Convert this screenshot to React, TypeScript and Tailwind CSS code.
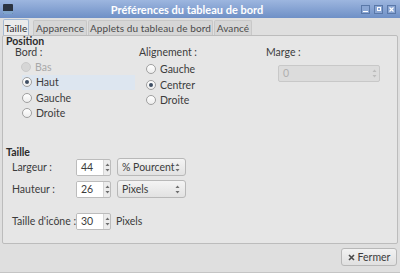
import React from "react";

function Radio({ checked, disabled }: { checked?: boolean; disabled?: boolean }) {
  return (
    <span
      className={
        "flex h-[10px] w-[10px] shrink-0 items-center justify-center rounded-full border " +
        (disabled
          ? "border-[#cacaca] bg-[#d6d6d6]"
          : "border-[#a0a0a0] bg-gradient-to-b from-white to-[#ededed]")
      }
    >
      {checked && <span className="h-[4px] w-[4px] rounded-full bg-[#3d4d63]" />}
    </span>
  );
}

function RadioRow({
  label,
  checked,
  disabled,
  highlight,
}: {
  label: string;
  checked?: boolean;
  disabled?: boolean;
  highlight?: boolean;
}) {
  return (
    <div
      className={
        "flex h-[15.5px] items-center gap-[4px] whitespace-nowrap " +
        (highlight ? "bg-[#dde6f0]" : "")
      }
    >
      <Radio checked={checked} disabled={disabled} />
      <span className={disabled ? "text-[#a8a8a8]" : "text-[#3c3c3c]"}>{label}</span>
    </div>
  );
}

// tiny up/down triangles used in spin buttons and combos
function Arrows({ disabled }: { disabled?: boolean }) {
  return (
    <svg width="5" height="9" viewBox="0 0 5 9" className="shrink-0">
      <path d="M2.5 0.5 L4.5 3 L0.5 3 Z" fill={disabled ? "#bcbcbc" : "#6e6e6e"} />
      <path d="M0.5 6 L4.5 6 L2.5 8.5 Z" fill={disabled ? "#bcbcbc" : "#6e6e6e"} />
    </svg>
  );
}

function SpinBox({ value }: { value: string }) {
  return (
    <div className="flex h-[17px] w-[35px] shrink-0 overflow-hidden rounded-[2px] border border-[#bcbcbc] bg-[#ececec]">
      <div className="flex w-[26px] items-center bg-white pl-[4px] text-[#3c3c3c]">{value}</div>
      <div className="flex flex-1 items-center justify-center border-l border-[#d6d6d6]">
        <Arrows />
      </div>
    </div>
  );
}

function Combo({ value }: { value: string }) {
  return (
    <div className="flex h-[18px] w-[69px] shrink-0 items-center justify-between whitespace-nowrap rounded-[3px] border border-[#b8b8b8] bg-gradient-to-b from-[#f4f4f4] to-[#e2e2e2] pl-[4px] pr-[5px] text-[#3c3c3c]">
      <span>{value}</span>
      <Arrows />
    </div>
  );
}

export default function App() {
  return (
    <div
      className="flex h-[273px] w-[400px] flex-col overflow-hidden bg-[#dfdfdf] text-[10.5px] leading-none text-[#3c3c3c]"
      style={{ fontFamily: 'Lato, "Noto Sans", sans-serif' }}
    >
      {/* Title bar */}
      <div className="flex h-[18px] shrink-0 items-center bg-gradient-to-b from-[#9db6df] to-[#6f90c6]">
        <div className="ml-[3px] flex h-[10px] w-[10px] flex-col overflow-hidden rounded-[1px] bg-[#2b3340]">
          <div className="flex-1" />
          <div className="h-[3px] bg-[#7fa4cc]" />
        </div>
        <div className="flex-1 whitespace-nowrap text-center text-[11px] font-bold text-white">
          Préférences du tableau de bord
        </div>
        <div className="mr-[4px] flex gap-[4px]">
          <div className="flex h-[9px] w-[9px] items-end justify-center border border-[#5a78a8] bg-[#8aa6d4] pb-[1px]">
            <div className="h-[1px] w-[5px] bg-white" />
          </div>
          <div className="flex h-[9px] w-[9px] items-center justify-center border border-[#5a78a8] bg-[#8aa6d4]">
            <div className="h-[4px] w-[4px] border border-white" />
          </div>
          <div className="flex h-[9px] w-[9px] items-center justify-center border border-[#5a78a8] bg-[#8aa6d4]">
            <svg width="5" height="5" viewBox="0 0 5 5">
              <path d="M0.5 0.5 L4.5 4.5 M4.5 0.5 L0.5 4.5" stroke="white" strokeWidth="1.2" />
            </svg>
          </div>
        </div>
      </div>

      {/* Tabs */}
      <div className="flex h-[17px] shrink-0 items-end gap-[1px] whitespace-nowrap pl-[3px] pt-[1px] text-[10px] tracking-[0.1px]">
        <div className="mr-[3px] flex h-[16px] w-[26px] items-center justify-center rounded-t-[2px] border border-b-0 border-[#a4bad4] bg-[#ebebeb] text-[#2c2c2c]">
          Taille
        </div>
        <div className="flex h-[15px] w-[54px] items-center justify-center rounded-t-[2px] border border-b-0 border-[#c8c8c8] bg-[#d6d6d6] text-[#4a4a4a]">
          Apparence
        </div>
        <div className="flex h-[15px] w-[125px] items-center justify-center rounded-t-[2px] border border-b-0 border-[#c8c8c8] bg-[#d6d6d6] text-[#4a4a4a]">
          Applets du tableau de bord
        </div>
        <div className="flex h-[15px] w-[38px] items-center justify-center rounded-t-[2px] border border-b-0 border-[#c8c8c8] bg-[#d6d6d6] text-[#4a4a4a]">
          Avancé
        </div>
      </div>

      {/* Panel */}
      <div className="mx-[2px] flex h-[209px] shrink-0 flex-col whitespace-nowrap rounded-[2px] border border-[#bcbcbc] bg-[#e6e6e6] pl-[3px]">
        <div className="h-[11px] font-bold text-[#2c2c2c]">Position</div>
        <div className="flex">
          <div className="flex w-[133px] flex-col">
            <div className="h-[11px] pl-[9px]">Bord :</div>
            <div className="ml-[15px] mt-[1px] flex w-[114px] flex-col">
              <RadioRow label="Bas" disabled />
              <div className="pl-[1px]">
                <RadioRow label="Haut" checked highlight />
              </div>
              <div className="pl-[1px]">
                <RadioRow label="Gauche" />
              </div>
              <div className="pl-[1px]">
                <RadioRow label="Droite" />
              </div>
            </div>
          </div>
          <div className="flex w-[127px] flex-col">
            <div className="h-[11px]">Alignement :</div>
            <div className="mt-[3.5px] flex flex-col pl-[7px]">
              <RadioRow label="Gauche" />
              <RadioRow label="Centrer" checked />
              <RadioRow label="Droite" />
            </div>
          </div>
          <div className="flex flex-col">
            <div className="h-[11px]">Marge :</div>
            <div className="ml-[12px] mt-[7px] flex h-[17px] w-[102px] rounded-[2px] border border-[#c8c8c8] bg-[#dcdcdc]">
              <div className="flex flex-1 items-center pl-[4px] text-[#b0b0b0]">0</div>
              <div className="flex w-[9px] items-center justify-center">
                <Arrows disabled />
              </div>
            </div>
          </div>
        </div>

        <div className="mt-[26px] h-[11px] font-bold text-[#2c2c2c]">Taille</div>
        <div className="flex flex-col gap-[4px] pl-[6px]">
          <div className="flex h-[18px] items-center">
            <span className="w-[64px]">Largeur :</span>
            <SpinBox value="44" />
            <span className="ml-[6px]">
              <Combo value="% Pourcent" />
            </span>
          </div>
          <div className="flex h-[18px] items-center">
            <span className="w-[64px]">Hauteur :</span>
            <SpinBox value="26" />
            <span className="ml-[6px]">
              <Combo value="Pixels" />
            </span>
          </div>
          <div className="mt-[10px] flex h-[18px] items-center">
            <span className="w-[64px]">Taille d'icône :</span>
            <SpinBox value="30" />
            <span className="ml-[5px]">Pixels</span>
          </div>
        </div>
      </div>

      {/* Bottom */}
      <div className="flex flex-1 justify-end border-b border-[#c4c4c4] pr-[3px] pt-[4px]">
        <div className="flex h-[18px] w-[56px] items-center justify-center gap-[3px] rounded-[3px] border border-[#b8b8b8] bg-gradient-to-b from-[#f2f2f2] to-[#e0e0e0] text-[#3c3c3c]">
          <svg width="7" height="7" viewBox="0 0 7 7">
            <path d="M1 1 L6 6 M6 1 L1 6" stroke="#4a4a4a" strokeWidth="1.6" />
          </svg>
          <span>Fermer</span>
        </div>
      </div>
    </div>
  );
}
